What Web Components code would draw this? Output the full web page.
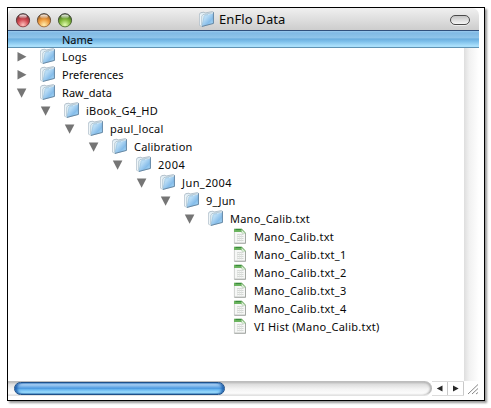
<!DOCTYPE html>
<html lang="en"><head><meta charset="utf-8"><title>EnFlo Data</title>
<style>html,body{margin:0;background:#fff}body{width:491px;height:408px;overflow:hidden;font-family:"Noto Sans","Open Sans",sans-serif;color:#080808}</style></head>
<body><finder-window></finder-window>
<script>
const make=(el,html)=>{el.attachShadow({mode:'open'}).innerHTML=html;};

/* A label whose tracking is adjusted to fill the width given in "w". */
customElements.define('fit-label',class extends HTMLElement{
 connectedCallback(){
  if(this.shadowRoot)return;
  make(this,`<style>:host{display:block;white-space:nowrap;flex:none}span{display:inline-block}</style><span></span>`);
  const s=this.shadowRoot.querySelector('span');
  s.textContent=this.getAttribute('text');
  const w=+this.getAttribute('w');
  s.style.letterSpacing=((w-s.getBoundingClientRect().width)/s.textContent.length).toFixed(3)+'px';
 }});

customElements.define('folder-icon',class extends HTMLElement{
 connectedCallback(){make(this,`<style>:host{display:block;width:16px;height:16px;flex:none}svg{display:block}</style>
 <svg width="16" height="16" viewBox="0 0 16 16"><defs><linearGradient id="f" x1="0" y1="0" x2="1" y2="1"><stop stop-color="#d3ebfa"/><stop offset=".35" stop-color="#b4d9f4"/><stop offset=".65" stop-color="#86bdea"/><stop offset="1" stop-color="#b4e2fa"/></linearGradient></defs>
 <path d="M.6 3 1.6 1.7 5 1.2 6 2 13.4.6 14.4 1.2V12.4L3 15.4.6 14.2Z" fill="#e2eef5" stroke="#9aabb7" stroke-width=".7"/>
 <path d="M.8 3.2 3 4.3V15.2L.8 14Z" fill="#eef5f8"/>
 <path d="M5.1 5.2 6 4.2 14.3 2.6 14.2 12.3 3 15.1Z" fill="url(#f)"/>
 <path d="M3 15.2 5.1 5.2 6.1 4.1 9 3.6" fill="none" stroke="#8ebddc" stroke-width=".6"/>
 <path d="M2.6 14.5 2.7 5.2 4 3.6 12.8 1.9" fill="none" stroke="#97b1c2" stroke-width=".6"/>
 <path d="M14.4 1.3V12.4L3 15.4" fill="none" stroke="#51789b" stroke-width=".8"/></svg>`);}});

customElements.define('file-icon',class extends HTMLElement{
 connectedCallback(){make(this,`<style>:host{display:block;width:16px;height:16px;flex:none}svg{display:block}</style>
 <svg width="16" height="16" viewBox="0 0 16 16"><path d="M2.4 1.2H10L13.5 5V15.2H2.4Z" fill="#f6f7f6" stroke="#bcc0bc" stroke-width=".7"/>
 <path d="M13.5 5V15.3H2.4" fill="none" stroke="#999d99" stroke-width=".8"/>
 <path d="M2 .8H9.8L13.8 5 9.9 4H2Z" fill="#6cb45f"/><path d="M3.5 1.5H9.6" stroke="#388b3b" stroke-width="1.1"/><path d="M9.3 1.6 9.9 5.2 13.4 5.3Z" fill="#ebf6e8" stroke="#79ad70" stroke-width=".4"/>
 <path d="M5 6.5h6.5M5 8.5h6.5M5 10.5h6.5M5 12.5h6.5" stroke="#d5d8d5" stroke-width="1"/><path d="M5.5 6V13.5M7.5 6V13.5M9.5 6V13.5" stroke="#dee0de" stroke-width=".6"/></svg>`);}});

customElements.define('tree-row',class extends HTMLElement{
 connectedCallback(){
  const a=n=>this.getAttribute(n),st=a('state');
  const tri=st==='closed'?'<path d="M1.5 0 10.5 4.7 1.5 9.4Z"/>':st==='open'?'<path d="M.8 .5H10.4L5.6 9.7Z"/>':'';
  make(this,`<style>:host{display:flex;align-items:center;height:18px;box-sizing:border-box;padding-left:${8+24*a('depth')}px;font-size:11px;line-height:18px}
  .tri{width:12px;height:10px;fill:#757575;margin-right:12px;flex:none}.icon{margin:0 6px 2px 0}</style>
  <svg class="tri" viewBox="0 0 12 10">${tri}</svg>${st==='file'?'<file-icon class="icon"></file-icon>':'<folder-icon class="icon"></folder-icon>'}<fit-label text="${a('name')}" w="${a('w')}"></fit-label>`);
 }});

customElements.define('title-bar',class extends HTMLElement{
 connectedCallback(){
  const orb=(i,d,c,l)=>`<svg width="16" height="16" viewBox="0 0 16 16"><defs><radialGradient id="o${i}" cx=".5" cy=".85" r=".85"><stop stop-color="${l}"/><stop offset=".5" stop-color="${c}"/><stop offset="1" stop-color="${d}"/></radialGradient><linearGradient id="h${i}" x2="0" y2="1"><stop stop-color="#fff" stop-opacity=".95"/><stop offset="1" stop-color="#fff" stop-opacity=".1"/></linearGradient><linearGradient id="r${i}" x2="0" y2="1"><stop stop-color="#333"/><stop offset="1" stop-color="${d}" stop-opacity=".7"/></linearGradient></defs><circle cx="8" cy="8.3" r="6.6" fill="url(#o${i})" stroke="url(#r${i})" stroke-width="1"/><ellipse cx="8" cy="4.5" rx="3.9" ry="2.1" fill="url(#h${i})"/></svg>`;
  make(this,`<style>:host{display:grid;grid-template-columns:191px 1fr 30px;align-items:center;height:22px;width:471px;background:linear-gradient(#f0f0f0,#e4e4e4 35%,#cdcdcd);border-radius:7px 7px 0 0;font-size:13px;line-height:20px}
  .orbs{display:flex;gap:5px;padding:2px 0 0 7px}.title{display:flex;align-items:center;gap:4px}.title folder-icon{margin-bottom:1px}.pill{box-sizing:border-box;width:20px;height:10px;border:1.5px solid #4a4a4a;border-radius:6px;background:linear-gradient(#c4c4c4,#f6f6f6);box-shadow:0 1px #eee;margin:2px 0 0 1px}</style>
  <div class="orbs">${orb(1,'#70282c','#cf4850','#ffc0bc')}${orb(2,'#8a5222','#ee9b3e','#ffeeb0')}${orb(3,'#35551b','#82b83c','#e2fcb0')}</div>
  <div class="title"><folder-icon></folder-icon><fit-label text="EnFlo Data" w="66.5"></fit-label></div><div class="pill"></div>`);
 }});

customElements.define('column-header',class extends HTMLElement{
 connectedCallback(){make(this,`<style>:host{display:flex;align-items:center;box-sizing:border-box;height:18px;width:471px;padding:2px 0 0 54px;border-top:1px solid #304f7c;border-bottom:1px solid #6093b3;background:linear-gradient(#9ccbee,#80b9e4 12%,#8fc4ea 42%,#6badde 50%,#7dbfea 65%,#a9dffb 92%);font-size:11px;line-height:16px}</style><fit-label text="Name" w="31"></fit-label>`);}});

customElements.define('scroll-bar',class extends HTMLElement{
 connectedCallback(){make(this,`<style>:host{display:flex;height:15px;width:471px}
 .track{width:424px;height:15px;box-sizing:border-box;background:linear-gradient(#c0c0c0,#dedede 18%,#f4f4f4 55%,#fff);border-top:1px solid #bdbdbd;border-bottom:1px solid #e2e2e2;border-radius:0 8px 8px 0;box-shadow:inset -2px 0 2px #b2b2b2;padding-left:6px}
 .thumb{width:211px;height:13px;box-sizing:border-box;border:1px solid #205088;border-radius:7px;background:linear-gradient(#6fa4d8,#a9d1f4 13%,#6aaae6 38%,#4b98de 48%,#6ab7f0 60%,#9ddfff 86%,#5d9dcb);box-shadow:inset 3px 0 3px -1px #1c5dac,inset -3px 0 3px -1px #1c5dac}
 svg{display:block}</style><div class="track"><div class="thumb"></div></div>
 <svg width="47" height="15" viewBox="0 0 47 15"><path d="M0 .5H32M0 14.5H32" stroke="#dcdcdc"/><path d="M15.5 1V14M31.5 1V14" stroke="#c9c9c9"/><path d="M10.5 4.5V10.5L4.8 7.5ZM21 4.5V10.5L26.7 7.5Z" fill="#282828"/><path d="M36 13 46 3.5M40 13 46 7.5M44 13 46 11.5" stroke="#858585" stroke-width="1"/></svg>`);}});

customElements.define('finder-window',class extends HTMLElement{
 connectedCallback(){
  const rows=[[0,'Logs','closed',25],[0,'Preferences','closed',61.5],[0,'Raw_data','open',50],[1,'iBook_G4_HD','open',72],[2,'paul_local','open',53.5],[3,'Calibration','open',58.5],[4,'2004','open',27.5],[5,'Jun_2004','open',50],[6,'9_Jun','open',29.5],[7,'Mano_Calib.txt','open',80],[8,'Mano_Calib.txt','file',80],[8,'Mano_Calib.txt_1','file',92.5],[8,'Mano_Calib.txt_2','file',92.5],[8,'Mano_Calib.txt_3','file',92.5],[8,'Mano_Calib.txt_4','file',92.5],[8,'VI Hist (Mano_Calib.txt)','file',125.5]];
  make(this,`<style>:host{display:block;box-sizing:border-box;width:478px;height:394px;margin:7px;border:1px solid #000;background:#fff;box-shadow:2px 2px 2px #999}
  .body{display:flex;width:471px;height:333px}.tree{width:456px}.gutter{width:15px;background:linear-gradient(90deg,#dedede,#f1f1f1 35%,#fff)}</style>
  <title-bar></title-bar><column-header></column-header><div class="body"><div class="tree">${rows.map(r=>`<tree-row depth="${r[0]}" name="${r[1]}" state="${r[2]}" w="${r[3]}"></tree-row>`).join('')}</div><div class="gutter"></div></div><scroll-bar></scroll-bar>`);
 }});
</script></body></html>
